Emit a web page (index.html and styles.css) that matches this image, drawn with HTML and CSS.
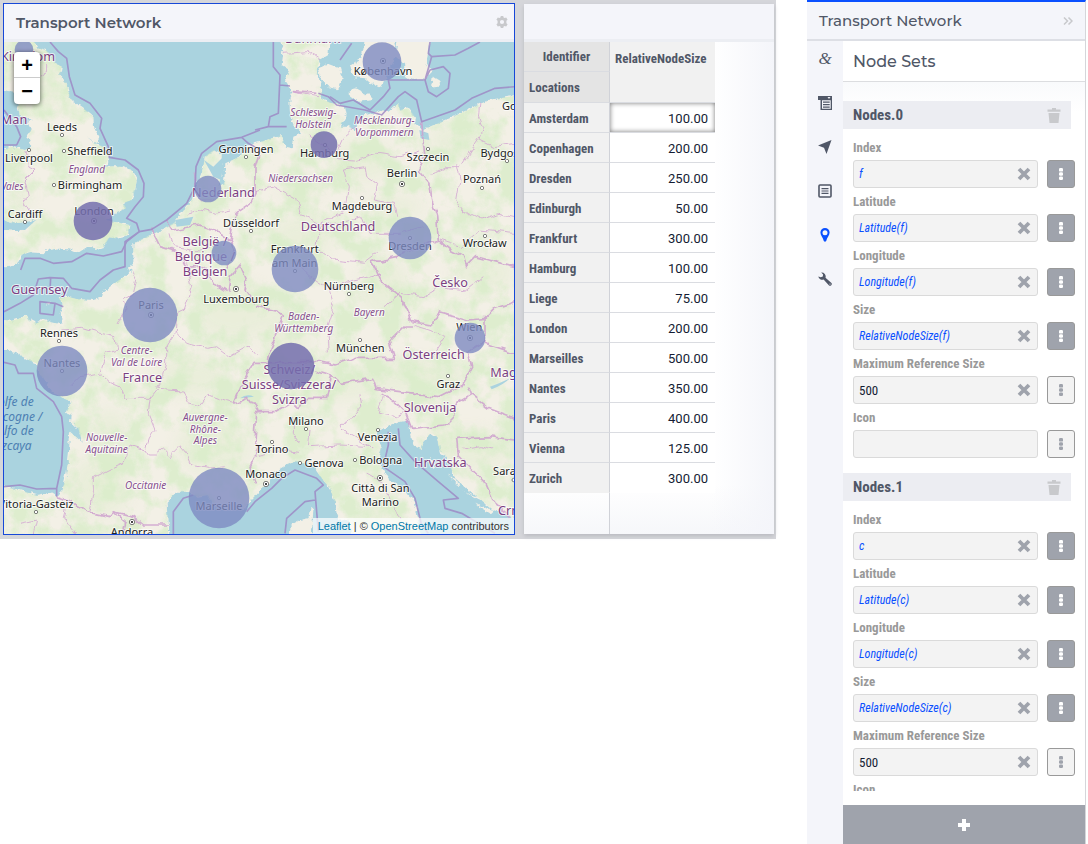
FILE: index.html
```
<!DOCTYPE html>
<html lang="en">
<head>
    <meta charset="UTF-8">
    <meta name="viewport" content="width=device-width, initial-scale=1.0">
    <title>Transport Network</title>
    <link rel="stylesheet" href="styles.css">
</head>
<body>
    <!-- Shared icons -->
    <svg class="icon-defs" aria-hidden="true">
        <symbol id="icon-clear" viewBox="0 0 14 14"><path d="M2 2l10 10M12 2L2 12" stroke="currentColor" stroke-width="3.8"/></symbol>
        <symbol id="icon-dots" viewBox="0 0 6 14"><rect x="1" y="1" width="4" height="3.6" rx="1.2"/><rect x="1" y="5.2" width="4" height="3.6" rx="1.2"/><rect x="1" y="9.4" width="4" height="3.6" rx="1.2"/></symbol>
        <symbol id="icon-trash" viewBox="0 0 14 15"><path d="M5 0h4v1.500h4.500v2.300h-13V1.500H5zM1.500 5h11l-1 10h-9z"/></symbol>
    </svg>

    <main class="dashboard">
        <!-- Map widget -->
        <section class="panel map-panel">
            <header class="panel-header">
                <h2>Transport Network</h2>
                <button class="icon-btn gear" aria-label="Settings">
                    <svg width="12" height="12" viewBox="0 0 12 12"><path fill-rule="evenodd" d="M4.800 0h2.400l.4 1.600 1 .5 1.600-.6 1.400 2.200-1.200 1.100v2.400l1.200 1.100-1.400 2.200-1.600-.6-1 .5-.4 1.600H4.800l-.4-1.600-1-.5-1.600.6L.4 8.300l1.200-1.100V4.800L.4 3.700l1.400-2.200 1.600.6 1-.5zM6 3.900a2.100 2.100 0 1 0 0 4.200 2.100 2.100 0 0 0 0-4.200z"/></svg>
                </button>
            </header>
            <div class="map">
                <svg class="map-canvas" viewBox="12 126 1530 1476" role="img" aria-label="Map of Europe">
                    <defs>
                        <filter id="soft"><feGaussianBlur stdDeviation="22"/></filter>
                        <filter id="rough" filterUnits="userSpaceOnUse" x="0" y="110" width="1560" height="1500">
                            <feTurbulence type="fractalNoise" baseFrequency="0.03" numOctaves="2" seed="4"/>
                            <feDisplacementMap in="SourceGraphic" scale="24" xChannelSelector="R" yChannelSelector="G"/>
                        </filter>
                        <filter id="coast" filterUnits="userSpaceOnUse" x="0" y="110" width="1560" height="1500">
                            <feTurbulence type="fractalNoise" baseFrequency="0.06" numOctaves="3" seed="9"/>
                            <feDisplacementMap in="SourceGraphic" scale="18" xChannelSelector="R" yChannelSelector="G"/>
                        </filter>
                        <filter id="forest" filterUnits="userSpaceOnUse" x="0" y="110" width="1560" height="1500" color-interpolation-filters="sRGB">
                            <feTurbulence type="fractalNoise" baseFrequency="0.014" numOctaves="5" seed="3"/>
                            <feColorMatrix values="0 0 0 0 0.85  0 0 0 0 0.93  0 0 0 0 0.79  4 0 0 0 -1.6"/>
                        </filter>
                        <radialGradient id="capital-dot">
                            <stop offset="35%" stop-color="#444"/><stop offset="50%" stop-color="#fff"/>
                        </radialGradient>
                        <clipPath id="land-clip"><use href="#mainland"/><use href="#britain"/></clipPath>
                    </defs>
                    <rect class="sea" x="12" y="126" width="1530" height="1476"/>

                    <!-- Land -->
                    <g class="land" filter="url(#coast)">
                        <path id="mainland" d="M0,960 L36,962 60,955 80,945 90,960 110,970 130,960 150,965 190,975 184,930 188,910 176,895 205,890 230,897 280,900 306,892 310,875 350,845 395,815 385,808 400,795 400,730 440,710 500,680 520,670 545,640 575,600 590,560 605,520 615,470 640,450 665,465 665,520 655,560 672,550 676,490 720,470 735,440 765,430 800,420 845,405 855,440 875,445 880,410 905,400 885,378 870,340 868,300 875,270 855,240 868,210 845,195 850,160 842,110 990,110 985,165 960,180 950,210 960,240 965,280 960,295 995,310 1035,320 1040,345 1018,380 1045,380 1065,388 1095,345 1145,330 1165,335 1195,310 1200,330 1225,325 1245,350 1240,370 1265,390 1325,365 1405,330 1435,315 1465,300 1560,285 1560,1560 1480,1530 1425,1485 1365,1435 1340,1370 1320,1355 1310,1310 1295,1300 1270,1325 1265,1350 1250,1345 1240,1335 1232,1300 1225,1280 1225,1262 1200,1265 1165,1280 1135,1290 1128,1305 1145,1340 1135,1385 1165,1435 1215,1470 1245,1510 1265,1615 1055,1615 1050,1580 1040,1555 1020,1560 1010,1545 1005,1510 990,1465 965,1435 940,1400 925,1395 885,1385 850,1400 825,1415 808,1450 780,1470 740,1515 720,1530 680,1530 650,1520 620,1485 590,1490 570,1475 530,1475 500,1505 505,1615 0,1615 0,1460 60,1470 110,1485 150,1478 170,1490 188,1470 200,1415 207,1355 210,1295 245,1325 235,1285 213,1265 215,1245 198,1235 215,1205 190,1195 155,1175 140,1145 120,1125 110,1090 85,1080 50,1060 0,1045 Z"/>
                        <path id="britain" d="M0,110 L95,110 112,143 138,150 150,165 165,188 185,200 180,225 200,250 205,275 215,300 250,325 280,350 282,380 298,410 290,430 262,412 292,435 315,440 328,470 318,492 300,505 320,500 360,498 395,510 410,540 405,570 395,600 370,610 378,625 345,640 320,660 388,676 384,704 345,715 328,712 310,742 280,748 262,740 235,758 215,750 180,745 160,752 150,742 130,760 85,757 62,765 50,790 30,800 0,803 0,690 60,690 88,670 110,660 60,668 40,670 0,660 0,455 35,440 75,450 95,440 82,415 92,390 82,370 95,360 60,345 52,320 60,305 38,285 45,275 0,270 Z"/>
                        <path d="M955,205 985,192 1020,205 1028,235 1015,268 985,262 965,240Z"/>
                        <path d="M1050,195 1085,175 1095,110 1180,110 1190,165 1175,200 1155,240 1140,262 1115,250 1098,235 1062,232Z"/>
                        <path d="M1045,285 1065,265 1105,285 1118,300 1080,305 1062,298Z"/>
                        <path d="M1195,110 1290,110 1280,190 1292,220 1275,238 1240,240 1215,232 1212,190 1185,165Z"/>
                        <path d="M1298,230 1325,247 1312,266 1295,252Z"/>
                        <path d="M932,1520 940,1530 935,1615 868,1615 872,1575 900,1560 925,1555Z"/>
                        <path d="M138,908 152,905 150,912 140,914Z"/>
                        <path d="M1290,1370 1310,1400 1300,1410Z M1340,1420 1380,1450 1375,1455Z M1390,1475 1460,1500 1455,1506Z M1420,1510 1480,1530 1470,1540Z"/>
                    </g>
                    <g clip-path="url(#land-clip)">
                        <g class="woods" filter="url(#soft)">
                            <ellipse cx="140" cy="250" rx="40" ry="80"/><ellipse cx="60" cy="580" rx="30" ry="60"/>
                            <ellipse cx="270" cy="710" rx="90" ry="20"/><ellipse cx="700" cy="930" rx="120" ry="90"/>
                            <ellipse cx="570" cy="1130" rx="110" ry="60"/><ellipse cx="300" cy="1460" rx="90" ry="90"/>
                            <ellipse cx="640" cy="1340" rx="110" ry="80"/><ellipse cx="860" cy="1010" rx="60" ry="120"/>
                            <ellipse cx="900" cy="720" rx="90" ry="70"/><ellipse cx="1000" cy="1160" rx="150" ry="40"/>
                            <ellipse cx="1250" cy="1130" rx="160" ry="50"/><ellipse cx="1150" cy="860" rx="70" ry="90"/>
                            <ellipse cx="1380" cy="420" rx="90" ry="50"/><ellipse cx="1450" cy="820" rx="90" ry="50"/>
                            <ellipse cx="1090" cy="480" rx="90" ry="60"/><ellipse cx="1400" cy="1350" rx="130" ry="60"/>
                            <ellipse cx="330" cy="1290" rx="50" ry="60"/><ellipse cx="1180" cy="620" rx="90" ry="30"/>
                            <ellipse cx="900" cy="560" rx="60" ry="40"/><ellipse cx="1130" cy="1540" rx="60" ry="50"/>
                        </g>
                        <rect class="forest" x="12" y="126" width="1530" height="1476" filter="url(#forest)"/>
                    </g>
                    <path class="lake" d="M12,660 Q50,684 108,660 L75,690 12,688Z M720,1195 Q740,1180 762,1190 M525,660 580,650 570,675 530,680Z M612,480 640,500 670,470 664,540 640,530Z M1470,1160 Q1500,1150 1530,1135 1510,1155 1475,1168Z M1258,390 1285,400 1288,420 1262,415Z"/>

                    <!-- Regional borders -->
                    <g class="regions" filter="url(#rough)">
                        <path d="M75,450 82,500 105,510 75,540 85,590 70,600 92,640 110,655 M140,190 140,215 120,225"/>
                        <path d="M190,990 250,985 300,1000 345,1010 350,1050 320,1060 300,1120 M210,1160 240,1130 295,1120 325,1145 360,1160 375,1195 450,1195 470,1170 M395,815 410,840 400,880 370,900 375,930 350,980 M560,790 575,860 550,930 530,940 525,1000 500,1040 500,1090 490,1130 470,1165 M525,990 560,1030 620,1045 650,1040 690,1070 750,1035 775,1065 M470,1165 550,1170 565,1210 600,1220 625,1185 680,1205 700,1210 M450,1195 445,1240 465,1290 445,1320 435,1350 390,1335 375,1390 330,1410 280,1435 280,1480 270,1530 M435,1350 445,1365 470,1365 490,1350 510,1370 540,1340 565,1370 575,1395 620,1405 680,1400"/>
                        <path d="M585,520 600,600 640,600 660,570 M560,640 600,630 650,640 690,630 M510,700 520,740 600,750 640,740"/>
                        <path d="M855,160 925,155 960,180 M875,275 900,280 960,290 M925,405 960,430 1010,460 1030,415 1065,385 M1010,475 1060,480 1130,460 1200,470 1260,450 M1030,510 1095,500 1100,530 1130,550 1120,600 1180,610 1190,650 M1030,510 1045,560 1035,630 960,670 900,640 890,600 820,560 765,575 M1265,680 1200,700 1110,700 1090,650 960,680 M960,680 950,740 1000,780 1090,790 1130,760"/>
                        <path d="M985,870 1000,920 980,980 985,1060 M880,780 930,830 990,870 1060,840 1110,830 1140,820 M1440,310 1435,350 1450,390 1440,420 1480,440 1545,430 M1370,490 1380,540 1370,600 1400,640 1440,660 1500,640 1545,650 M1295,520 1340,500 1380,500 1440,410 M1320,720 1380,740 1440,690 1540,700"/>
                        <path d="M1155,920 1200,880 1270,890 1320,860 1400,870 1450,830 M1240,975 1290,990 1340,1010 1300,1070 1220,1080 M1080,1180 1085,1220 1040,1270 1020,1270 1025,1290 1110,1340 M930,1290 925,1340 1020,1335 1120,1340 M880,1250 880,1300 900,1330 M765,1370 830,1350 900,1360 M1150,1190 1135,1240 1190,1250 1210,1235 M1100,1420 1150,1450 1200,1560 M1390,1350 1440,1340 1480,1350 M60,1570 110,1560 100,1602 M200,1510 190,1550 230,1602"/>
                    </g>

                    <!-- Country borders -->
                    <g class="borders" filter="url(#rough)">
                        <path d="M455,688 480,740 530,755 560,805 610,800 640,850 680,875 M500,660 520,690 600,675 640,690 690,720 705,760 680,800 M690,720 705,640 750,610 765,580 765,500 780,450 M690,830 720,795 740,840 735,870 765,910 M685,875 690,830"/>
                        <path d="M765,920 835,935 850,945 810,1045 805,1085 M700,1210 720,1160 765,1090 805,1090 M700,1210 745,1195 770,1230 765,1330 780,1340 750,1400 770,1450"/>
                        <path d="M1265,365 1270,430 1275,470 1255,510 1290,550 1295,600 1310,650 1315,720 1265,740 1185,770 1115,785 1125,800 1145,845 1205,895 1235,965 1295,975 1315,935 1405,960 1455,955 1485,925 1545,905 M1315,720 1350,750 1390,770 1400,800 1430,770 1545,800"/>
                        <path d="M1235,975 1215,975 1165,1025 1180,1075 1145,1075 1065,1075 1005,1095 955,1085 900,1085 805,1085 M945,1110 995,1125 1025,1150 1115,1135 1125,1165 1245,1180 1315,1190 1385,1155 1415,1105 1405,1055 1455,1025 1455,955 M1455,1030 1545,1060 M995,1125 980,1195 925,1195 895,1225 875,1205 825,1235 765,1235"/>
                        <path d="M1145,1180 1180,1200 1215,1235 1235,1285 1335,1275 1365,1245 1365,1215 1415,1185 1405,1160 M1415,1185 1465,1225 1545,1255 M1545,1320 1465,1310 1370,1315 1375,1365 1455,1445 1485,1515 1535,1555"/>
                        <path d="M170,1490 200,1500 260,1535 330,1550 340,1535 400,1550 430,1575 505,1575 M340,1535 380,1570 370,1602"/>
                        <path d="M875,275 955,280"/>
                    </g>

                    <!-- Sea borders -->
                    <g class="sea-borders">
                        <path d="M150,126 175,155 200,175 208,230 225,285 270,310 305,355 300,385 325,440 328,472 375,480 415,510 432,550 430,590 405,620 380,655 410,670 418,695 380,725 365,755 310,768 260,760 215,785 160,790 120,775 75,775 62,810"/>
                        <path d="M780,390 725,412 650,425 605,460 588,500 585,560 560,610 500,660 455,688 418,695 375,725 375,800 340,810 300,840 270,875 215,865 190,835 150,833 115,837 100,885 60,910 12,935 M152,833 150,870 M120,905 165,910 160,945 120,940Z M165,910 190,920"/>
                        <path d="M12,330 50,380 62,410 50,435 12,435 M12,1087 45,1095 55,1120 100,1120 110,1165 160,1205 185,1250 190,1295 185,1395 170,1465 110,1467 60,1455 12,1460 M170,1465 170,1490"/>
                        <path d="M725,412 745,430 780,450 M820,126 820,200 840,225 835,340 810,350 805,380 765,390 M805,380 860,380 M840,255 870,258 M955,280 985,290 1010,315 1095,330 1145,345 1195,290 1215,275 1250,300 1265,365 1365,330 1415,295 1485,265 1545,260"/>
                        <path d="M1020,180 1055,130 M990,290 1020,310 1060,300 1110,330 1150,290 1170,265 1165,240 1275,240 1295,170 1365,165 1405,145 1440,126 M1275,240 1290,210 1330,200 1350,220 1345,265 1310,290 1285,275Z M1290,126 1285,160 1295,170"/>
                        <path d="M520,1602 520,1535 550,1495 580,1485 M740,1535 765,1505 815,1465 845,1435 885,1410 950,1435 970,1455 945,1475 950,1535 955,1595 M855,1600 860,1555 915,1505 945,1500"/>
                        <path d="M1165,1295 1165,1335 1150,1400 1215,1445 1245,1495 1265,1575 1285,1600 M1195,1285 1200,1335 1245,1385 1315,1445 1375,1495 1330,1500 1335,1525 1385,1540 1485,1600"/>
                    </g>

                    <!-- Town markers -->
                    <g class="towns">
                        <circle cx="186" cy="405" r="5"/><circle cx="192" cy="453" r="5"/><circle cx="87" cy="450" r="5"/><circle cx="162" cy="555" r="5"/>
                        <circle cx="75" cy="666" r="5"/><circle cx="738" cy="471" r="5"/><circle cx="753" cy="693" r="5"/><circle cx="1284" cy="447" r="5"/>
                        <circle cx="1521" cy="483" r="5"/><circle cx="1446" cy="564" r="5"/><circle cx="1086" cy="594" r="5"/><circle cx="1455" cy="708" r="5"/>
                        <circle cx="975" cy="435" r="5"/><circle cx="1230" cy="714" r="5"/><circle cx="885" cy="813" r="5"/><circle cx="177" cy="1023" r="5"/>
                        <circle cx="186" cy="1113" r="5"/><circle cx="1047" cy="882" r="5"/><circle cx="1080" cy="1020" r="5"/><circle cx="1344" cy="1128" r="5"/>
                        <circle cx="918" cy="1287" r="5"/><circle cx="816" cy="1326" r="5"/><circle cx="1134" cy="1290" r="5"/><circle cx="900" cy="1389" r="5"/>
                        <circle cx="1065" cy="1380" r="5"/><circle cx="657" cy="1494" r="5"/><circle cx="108" cy="1536" r="5"/><circle cx="1541" cy="1440" r="5"/>
                    </g>
                    <g class="towns capitals">
                        <circle cx="282" cy="663" r="8"/><circle cx="1149" cy="183" r="8"/><circle cx="1206" cy="552" r="8"/><circle cx="453" cy="945" r="8"/>
                        <circle cx="708" cy="867" r="8"/><circle cx="1410" cy="1014" r="8"/><circle cx="798" cy="1452" r="8"/><circle cx="1140" cy="1434" r="8"/><circle cx="396" cy="1566" r="8"/>
                    </g>

                    <!-- Labels -->
                    <g class="label city">
                        <text x="186" y="392">Leeds</text><text x="270" y="465">Sheffield</text><text x="87" y="487">Liverpool</text><text x="270" y="567">Birmingham</text>
                        <text x="75" y="653">Cardiff</text><text x="282" y="644">London</text><text x="738" y="460">Groningen</text><text x="753" y="681">Düsseldorf</text>
                        <text x="1149" y="224">København</text><text x="974" y="471">Hamburg</text><text x="1284" y="484">Szczecin</text><text x="1206" y="532">Berlin</text>
                        <text x="1522" y="471">Bydgoszcz</text><text x="1446" y="550">Poznań</text><text x="1086" y="631">Magdeburg</text><text x="1454" y="741">Wrocław</text>
                        <text x="1230" y="749">Dresden</text><text x="884" y="760">Frankfurt</text><text x="884" y="801">am Main</text><text x="1560" y="330">Gdynia</text>
                        <text x="177" y="1010">Rennes</text><text x="186" y="1100">Nantes</text><text x="453" y="927">Paris</text><text x="709" y="910">Luxembourg</text>
                        <text x="1047" y="871">Nürnberg</text><text x="1081" y="1057">München</text><text x="1408" y="994">Wien</text><text x="1345" y="1165">Graz</text>
                        <text x="918" y="1274">Milano</text><text x="1133" y="1324">Venezia</text><text x="816" y="1359">Torino</text><text x="972" y="1401">Genova</text>
                        <text x="1142" y="1392">Bologna</text><text x="798" y="1434">Monaco</text><text x="1141" y="1476">Città di San</text><text x="1141" y="1517">Marino</text>
                        <text x="657" y="1529">Marseille</text><text x="108" y="1523">Vitoria-Gasteiz</text><text x="396" y="1607">Andorra</text><text x="1545" y="1424">Sarajevo</text>
                    </g>
                    <g class="label country">
                        <text x="84" y="184">Kingdom</text><text x="42" y="371">Man</text><text x="670" y="591">Nederland</text><text x="615" y="738">België /</text><text x="615" y="782">Belgique /</text>
                        <text x="615" y="827">Belgien</text><text x="1014" y="693">Deutschland</text><text x="118" y="883">Guernsey</text><text x="427" y="1146">France</text>
                        <text x="1350" y="860">Česko</text><text x="1301" y="1078">Österreich</text><text x="868" y="1122">Schweiz/</text><text x="867" y="1167">Suisse/Svizzera/</text>
                        <text x="868" y="1212">Svizra</text><text x="1290" y="1236">Slovenija</text><text x="1321" y="1401">Hrvatska</text><text x="938" y="130">Danmark</text>
                        <text class="from" x="1471" y="1130">Magyarország</text><text class="from" x="1494" y="1545">Crna</text>
                    </g>
                    <g class="label region">
                        <text x="260" y="518">England</text><text x="32" y="570">Wales</text><text x="940" y="347">Schleswig-</text><text x="940" y="383">Holstein</text>
                        <text x="1153" y="373">Mecklenburg-</text><text x="1153" y="409">Vorpommern</text><text x="902" y="545">Niedersachsen</text>
                        <text x="410" y="1062">Centre-</text><text x="410" y="1098">Val de Loire</text><text x="616" y="1262">Auvergne-</text><text x="616" y="1298">Rhône-</text><text x="616" y="1333">Alpes</text>
                        <text x="320" y="1323">Nouvelle-</text><text x="320" y="1359">Aquitaine</text><text x="437" y="1467">Occitanie</text>
                        <text x="911" y="959">Baden-</text><text x="911" y="995">Württemberg</text><text x="1108" y="949">Bayern</text>
                    </g>
                    <g class="label water">
                        <text x="101" y="1218">Golfe de</text><text x="127" y="1262">Gascogne /</text><text x="101" y="1306">Golfo de</text><text x="95" y="1350">Vizcaya</text>
                    </g>

                    <!-- Nodes, sized by RelativeNodeSize -->
                    <g class="nodes">
                        <circle cx="72" cy="149" r="28"/>
                        <circle class="overlap" cx="279" cy="663" r="58"/>
                        <circle cx="624" cy="567" r="40"/>
                        <circle cx="672" cy="759" r="37"/>
                        <circle cx="1146" cy="185" r="58"/>
                        <circle class="overlap" cx="972" cy="434" r="40"/>
                        <circle cx="1230" cy="714" r="64"/>
                        <circle cx="885" cy="807" r="70"/>
                        <circle cx="450" cy="945" r="82"/>
                        <circle cx="186" cy="1113" r="76"/>
                        <circle class="overlap" cx="873" cy="1098" r="70"/>
                        <circle cx="1410" cy="1014" r="46"/>
                        <circle cx="657" cy="1494" r="91"/>
                    </g>
                </svg>
                <div class="zoom-control">
                    <button aria-label="Zoom in">+</button>
                    <button aria-label="Zoom out">−</button>
                </div>
                <div class="attribution"><a href="#">Leaflet</a> | © <a href="#">OpenStreetMap</a> contributors</div>
            </div>
        </section>

        <!-- Table widget -->
        <section class="panel table-panel">
            <header class="panel-header"></header>
            <div class="table-body">
                <table>
                    <thead>
                        <tr><th class="corner center">Identifier</th><th class="column-title" rowspan="2">RelativeNodeSize</th></tr>
                        <tr><th class="corner">Locations</th></tr>
                    </thead>
                    <tbody>
                        <tr><th>Amsterdam</th><td class="selected">100.00</td></tr>
                        <tr><th>Copenhagen</th><td>200.00</td></tr>
                        <tr><th>Dresden</th><td>250.00</td></tr>
                        <tr><th>Edinburgh</th><td>50.00</td></tr>
                        <tr><th>Frankfurt</th><td>300.00</td></tr>
                        <tr><th>Hamburg</th><td>100.00</td></tr>
                        <tr><th>Liege</th><td>75.00</td></tr>
                        <tr><th>London</th><td>200.00</td></tr>
                        <tr><th>Marseilles</th><td>500.00</td></tr>
                        <tr><th>Nantes</th><td>350.00</td></tr>
                        <tr><th>Paris</th><td>400.00</td></tr>
                        <tr><th>Vienna</th><td>125.00</td></tr>
                        <tr><th>Zurich</th><td>300.00</td></tr>
                    </tbody>
                </table>
                <div class="table-rest"></div>
            </div>
        </section>
    </main>

    <!-- Options pane -->
    <aside class="sidebar">
        <header class="sidebar-header">
            <h2>Transport Network</h2>
            <button class="icon-btn" aria-label="Collapse"><svg width="10" height="8" viewBox="0 0 10 8"><path d="M1 .5L4.500 4 1 7.500M5.500 .5L9 4 5.500 7.500" fill="none" stroke="currentColor" stroke-width="1.500"/></svg></button>
        </header>
        <div class="sidebar-main">
            <nav class="tabs">
                <button class="ampersand" aria-label="General">&amp;</button>
                <button aria-label="Contents"><svg width="14" height="14" viewBox="0 0 14 14"><path fill-rule="evenodd" d="M0 0h14v14H2.500V4H0zM9.500 1l1.500 2 1.500-2zM4 4.200v8.500h8.700V4.200z"/><path d="M5 5.500h6.700v1.200H5zM5 8h6.700v1.200H5zM5 10.500h6.700v1.200H5z"/></svg></button>
                <button aria-label="Navigation"><svg width="14" height="14" viewBox="0 0 14 14"><path d="M13.500 0L8.500 14 6 7.800 0 5.500z"/></svg></button>
                <button aria-label="List"><svg width="14" height="14" viewBox="0 0 14 14"><rect x="1" y="1" width="12" height="12" rx="1" fill="none" stroke="currentColor" stroke-width="1.600"/><path d="M3.500 4h7v1.200h-7zM3.500 6.400h7v1.200h-7zM3.500 8.800h7V10h-7z"/></svg></button>
                <button class="active" aria-label="Node sets"><svg width="10" height="14" viewBox="0 0 10 14"><path fill-rule="evenodd" d="M5 0a4.600 4.600 0 0 0-4.600 4.600C.4 7.500 3 9.500 3.800 13q1.200 1.300 2.400 0C7 9.500 9.600 7.500 9.600 4.600A4.600 4.600 0 0 0 5 0zm0 2.200a2.500 2.500 0 1 1 0 5 2.500 2.500 0 0 1 0-5z"/></svg></button>
                <button aria-label="Tools"><svg width="14" height="14" viewBox="0 0 14 14"><path fill-rule="evenodd" d="M3.200.5a4 4 0 0 1 4.300 5.200l5.700 5a1.700 1.700 0 0 1-2.400 2.500L5.600 7.600A4 4 0 0 1 .3 4.500l2.500.8 2-.8.300-2zM12 11.400a.6.6 0 1 0 0 1.200.6.6 0 0 0 0-1.200z"/></svg></button>
            </nav>
            <div class="content">
                <h3>Node Sets</h3>
                <form class="fields">
                    <fieldset>
                        <div class="set-header"><span>Nodes.0</span><button type="button" class="icon-btn" aria-label="Delete Nodes.0"><svg width="14" height="15"><use href="#icon-trash"/></svg></button></div>
                        <label for="index-0">Index</label>
                        <div class="row"><div class="box"><input class="bound" id="index-0" value="f"><button type="button" aria-label="Clear"><svg width="14" height="14"><use href="#icon-clear"/></svg></button></div><button type="button" class="more filled" aria-label="More"><svg width="6" height="14"><use href="#icon-dots"/></svg></button></div>
                        <label for="latitude-0">Latitude</label>
                        <div class="row"><div class="box"><input class="bound" id="latitude-0" value="Latitude(f)"><button type="button" aria-label="Clear"><svg width="14" height="14"><use href="#icon-clear"/></svg></button></div><button type="button" class="more filled" aria-label="More"><svg width="6" height="14"><use href="#icon-dots"/></svg></button></div>
                        <label for="longitude-0">Longitude</label>
                        <div class="row"><div class="box"><input class="bound" id="longitude-0" value="Longitude(f)"><button type="button" aria-label="Clear"><svg width="14" height="14"><use href="#icon-clear"/></svg></button></div><button type="button" class="more filled" aria-label="More"><svg width="6" height="14"><use href="#icon-dots"/></svg></button></div>
                        <label for="size-0">Size</label>
                        <div class="row"><div class="box"><input class="bound" id="size-0" value="RelativeNodeSize(f)"><button type="button" aria-label="Clear"><svg width="14" height="14"><use href="#icon-clear"/></svg></button></div><button type="button" class="more filled" aria-label="More"><svg width="6" height="14"><use href="#icon-dots"/></svg></button></div>
                        <label for="max-0">Maximum Reference Size</label>
                        <div class="row"><div class="box"><input id="max-0" value="500"><button type="button" aria-label="Clear"><svg width="14" height="14"><use href="#icon-clear"/></svg></button></div><button type="button" class="more" aria-label="More"><svg width="6" height="14"><use href="#icon-dots"/></svg></button></div>
                        <label for="icon-0">Icon</label>
                        <div class="row"><div class="box"><input id="icon-0" value=""></div><button type="button" class="more" aria-label="More"><svg width="6" height="14"><use href="#icon-dots"/></svg></button></div>
                    </fieldset>
                    <fieldset>
                        <div class="set-header"><span>Nodes.1</span><button type="button" class="icon-btn" aria-label="Delete Nodes.1"><svg width="14" height="15"><use href="#icon-trash"/></svg></button></div>
                        <label for="index-1">Index</label>
                        <div class="row"><div class="box"><input class="bound" id="index-1" value="c"><button type="button" aria-label="Clear"><svg width="14" height="14"><use href="#icon-clear"/></svg></button></div><button type="button" class="more filled" aria-label="More"><svg width="6" height="14"><use href="#icon-dots"/></svg></button></div>
                        <label for="latitude-1">Latitude</label>
                        <div class="row"><div class="box"><input class="bound" id="latitude-1" value="Latitude(c)"><button type="button" aria-label="Clear"><svg width="14" height="14"><use href="#icon-clear"/></svg></button></div><button type="button" class="more filled" aria-label="More"><svg width="6" height="14"><use href="#icon-dots"/></svg></button></div>
                        <label for="longitude-1">Longitude</label>
                        <div class="row"><div class="box"><input class="bound" id="longitude-1" value="Longitude(c)"><button type="button" aria-label="Clear"><svg width="14" height="14"><use href="#icon-clear"/></svg></button></div><button type="button" class="more filled" aria-label="More"><svg width="6" height="14"><use href="#icon-dots"/></svg></button></div>
                        <label for="size-1">Size</label>
                        <div class="row"><div class="box"><input class="bound" id="size-1" value="RelativeNodeSize(c)"><button type="button" aria-label="Clear"><svg width="14" height="14"><use href="#icon-clear"/></svg></button></div><button type="button" class="more filled" aria-label="More"><svg width="6" height="14"><use href="#icon-dots"/></svg></button></div>
                        <label for="max-1">Maximum Reference Size</label>
                        <div class="row"><div class="box"><input id="max-1" value="500"><button type="button" aria-label="Clear"><svg width="14" height="14"><use href="#icon-clear"/></svg></button></div><button type="button" class="more" aria-label="More"><svg width="6" height="14"><use href="#icon-dots"/></svg></button></div>
                        <label for="icon-1">Icon</label>
                        <div class="row"><div class="box"><input id="icon-1" value=""></div><button type="button" class="more" aria-label="More"><svg width="6" height="14"><use href="#icon-dots"/></svg></button></div>
                    </fieldset>
                </form>
                <button class="add-btn" aria-label="Add node set"><svg width="14" height="14" viewBox="0 0 14 14"><path d="M5 1h4v4h4v4H9v4H5V9H1V5h4z"/></svg></button>
            </div>
        </div>
    </aside>
</body>
</html>
```
FILE: styles.css
```
* {
    box-sizing: border-box;
}
body {
    margin: 0;
    display: flex;
    align-items: flex-start;
    gap: 31px;
    height: 100vh;
    padding-right: 2px;
    background: #fff;
    color: #505767;
    font-family: "Roboto Condensed", Roboto, sans-serif;
    font-size: 13px;
}
h2, h3 {
    margin: 0;
    font-family: Montserrat, Inter, sans-serif;
}
button {
    padding: 0;
    border: none;
    background: none;
    color: inherit;
    cursor: pointer;
}
svg {
    display: block;
    fill: currentColor;
}
.icon-defs {
    position: absolute;
    width: 0;
    height: 0;
}
.icon-btn {
    color: #c8c9cc;
}

/* Dashboard */
.dashboard {
    flex: 1;
    display: grid;
    grid-template-columns: 1fr 250px;
    gap: 9px;
    padding: 3px 2px 4px 3px;
    background: #d5d6da;
}
.panel {
    display: flex;
    flex-direction: column;
    min-width: 0;
    background: #fff;
}
.map-panel {
    border: 1px solid #1748d8;
}
.table-panel {
    margin: 1px 0;
    box-shadow: 0 2px 4px #b9bac0;
}
.panel-header {
    display: flex;
    align-items: center;
    justify-content: space-between;
    height: 38px;
    padding: 1px 6px 0 12px;
    background: #f4f5fa;
    border-bottom: 3px solid #eceef3;
}
.panel-header h2 {
    font-size: 15px;
    font-weight: 600;
}

/* Map */
.map {
    position: relative;
    overflow: hidden;
}
.map-canvas {
    width: 100%;
    height: auto;
}
.sea, .lake {
    fill: #aad3df;
}
.land {
    fill: #f3f0e6;
}
.woods {
    fill: #dcebc9;
    opacity: 0.4;
}
.forest {
    opacity: 0.8;
}
.regions, .borders, .sea-borders {
    fill: none;
    stroke: #d3a6d3;
    stroke-width: 3px;
    stroke-linejoin: round;
    opacity: 0.8;
}
.borders {
    stroke: #cd9dce;
    stroke-width: 5px;
}
.sea-borders {
    stroke: #9d86c4;
    stroke-width: 5px;
}
.towns {
    fill: #fff;
    stroke: #444;
    stroke-width: 2px;
}
.capitals {
    fill: url(#capital-dot);
}
.label {
    font-family: "Noto Sans", sans-serif;
    font-size: 33px;
    text-anchor: middle;
    paint-order: stroke;
    stroke: rgba(255, 255, 255, 0.7);
    stroke-width: 6px;
    stroke-linejoin: round;
}
.city {
    fill: #222;
}
.country {
    font-size: 38px;
    fill: #7c3f82;
}
.country .from {
    text-anchor: start;
}
.region {
    font-size: 30px;
    font-style: italic;
    fill: #87508e;
}
.water {
    font-size: 36px;
    font-style: italic;
    text-anchor: end;
    fill: #4d80b3;
    stroke: none;
}
.nodes {
    fill: #7e8bc2;
    fill-opacity: 0.8;
}
.nodes .overlap {
    fill: #746eae;
    fill-opacity: 0.85;
}
.zoom-control {
    position: absolute;
    top: 10px;
    left: 10px;
    width: 26px;
    border-radius: 4px;
    background: #fff;
    box-shadow: 0 1px 5px rgba(0, 0, 0, 0.65);
}
.zoom-control button {
    display: block;
    width: 26px;
    height: 26px;
    color: #000;
    font: bold 20px/26px "Liberation Sans", sans-serif;
}
.zoom-control button:first-child {
    border-bottom: 1px solid #ccc;
}
.attribution {
    position: absolute;
    right: 0;
    bottom: 0;
    padding: 0 5px;
    background: rgba(255, 255, 255, 0.7);
    color: #333;
    font: 11px/16px "Liberation Sans", sans-serif;
}
.attribution a {
    color: #0078a8;
    text-decoration: none;
}

/* Table */
.table-body {
    flex: 1;
    display: flex;
    flex-direction: column;
    background: linear-gradient(to right, transparent 75%, #f4f5fa), linear-gradient(#fff 90%, #f6f7fa);
}
table {
    width: 191px;
    border-collapse: separate;
    border-spacing: 0;
    table-layout: fixed;
}
th, td {
    height: 30px;
    padding: 2px 5px 0;
    border-bottom: 1px solid #dadce1;
}
th {
    width: 86px;
    border-right: 1px solid #d0d2d8;
    background: #f1f1f1;
    font-size: 13px;
    text-align: left;
}
td {
    padding-right: 7px;
    background: #fff;
    color: #141c33;
    font: 13px Roboto, sans-serif;
    text-align: right;
}
.corner {
    height: 31px;
    padding-top: 0;
    background: #e4e4e4;
}
.corner + .column-title {
    width: 105px;
    padding-top: 9px;
    border-right: none;
    vertical-align: top;
}
.center {
    height: 30px;
    text-align: center;
}
.selected {
    box-shadow: inset 0 0 5px #777;
}
tbody tr:last-child th {
    border-bottom-color: #f1f1f1;
}
tbody tr:last-child td {
    border-bottom-color: #fff;
}
.table-rest {
    flex: 1;
    width: 86px;
    border-right: 1px solid #d0d2d8;
}

/* Sidebar */
.sidebar {
    display: flex;
    flex-direction: column;
    width: 279px;
    height: 100%;
    border-top: 2px solid #0a50ff;
    border-right: 1px solid #d5d6da;
}
.sidebar-header {
    display: flex;
    align-items: center;
    justify-content: space-between;
    height: 39px;
    padding: 0 12px;
    background: #f4f5fa;
    border-bottom: 2px solid #dddfe5;
}
.sidebar-header h2 {
    font-size: 15px;
    font-weight: 500;
}
.sidebar-main {
    flex: 1;
    display: flex;
    min-height: 0;
}
.tabs {
    display: flex;
    flex-direction: column;
    align-items: center;
    gap: 16px;
    width: 36px;
    padding-top: 4px;
    background: #f4f5fa;
}
.tabs button {
    display: grid;
    place-items: center;
    width: 28px;
    height: 28px;
}
.tabs .ampersand {
    font: italic 17px "Liberation Serif", serif;
}
.tabs .active {
    color: #0a50ff;
}
.content {
    flex: 1;
    display: flex;
    flex-direction: column;
    min-width: 0;
}
.content h3 {
    padding: 2px 10px 0;
    border-bottom: 1px solid #dcdde0;
    font-size: 16px;
    font-weight: 500;
    line-height: 38px;
}
.fields {
    flex: 1;
    margin-bottom: 14px;
    padding: 19px 10px 0 0;
    overflow: hidden;
    background: linear-gradient(#f9fafc, #fff 30px);
}
fieldset {
    min-width: 0;
    margin: 0 0 15px;
    padding: 0;
    border: none;
}
.set-header {
    display: flex;
    align-items: center;
    justify-content: space-between;
    height: 28px;
    margin: 0 4px 5px 0;
    padding: 0 10px;
    background: #ecedf2;
    font-size: 15px;
    font-weight: bold;
}
label {
    display: block;
    padding: 2px 0 0 10px;
    color: #999;
    font-size: 13px;
    font-weight: bold;
    line-height: 24px;
}
.row {
    display: flex;
    gap: 9px;
    padding-left: 10px;
}
.box {
    flex: 1;
    display: flex;
    align-items: center;
    min-width: 0;
    height: 28px;
    padding: 0 6px 0 5px;
    border: 1px solid #dadada;
    border-radius: 3px;
    background: #f3f3f3;
    color: #9fa3ac;
}
.box input {
    flex: 1;
    min-width: 0;
    padding: 0;
    border: none;
    background: none;
    color: #141c33;
    font: inherit;
}
.box .bound {
    color: #0a50ff;
    font-size: 12px;
    font-style: italic;
}
.more {
    display: grid;
    place-items: center;
    width: 28px;
    height: 28px;
    border: 1px solid #999;
    border-radius: 3px;
    background: #f3f3f3;
    color: #9fa3ac;
}
.filled {
    background: #9fa3ac;
    color: #fff;
}
.add-btn {
    display: grid;
    place-items: center;
    height: 39px;
    background: #9fa3ac;
    color: #fff;
}
```
